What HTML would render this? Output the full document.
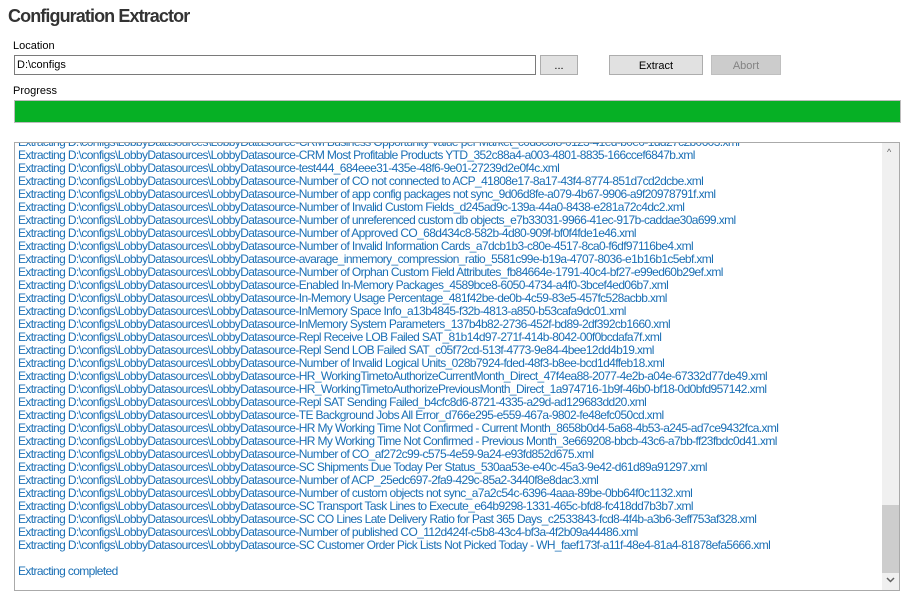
<!DOCTYPE html>
<html><head><meta charset="utf-8"><style>
*{margin:0;padding:0;box-sizing:border-box}
body{width:908px;height:603px;background:#fff;font-family:"Liberation Sans",sans-serif;font-size:12px;color:#000;position:relative;overflow:hidden}
.abs{position:absolute}
h1{position:absolute;left:8px;top:6px;font-size:18px;font-weight:bold;color:#333;letter-spacing:-0.9px}
.lbl{font-size:11px;color:#000}
.btn{position:absolute;border:1px solid #adadad;background:#e1e1e1;text-align:center;font-size:11px;line-height:20px;height:20px}
#log{position:absolute;left:14px;top:142px;width:886px;height:449px;border:1px solid #aaa;overflow:hidden}
#lines{position:absolute;left:3px;top:-7px;color:#1a6fb5;font-size:12px;line-height:13px;white-space:nowrap;letter-spacing:-0.62px}
#sb{position:absolute;right:0;top:0;width:17px;height:447px;background:#f0f0f0}
</style></head><body>
<h1>Configuration Extractor</h1>
<div class="abs lbl" style="left:13px;top:40px">Location</div>
<div class="abs" style="left:14px;top:55px;width:522px;height:20px;border:1px solid #7a7a7a;padding:3px 0 0 2px;font-size:11px">D:\configs</div>
<div class="btn" style="left:540px;top:55px;width:38px">...</div>
<div class="btn" style="left:609px;top:55px;width:94px">Extract</div>
<div class="btn" style="left:711px;top:55px;width:70px;background:#cccccc;border-color:#bfbfbf;color:#838383">Abort</div>
<div class="abs lbl" style="left:13px;top:85px">Progress</div>
<div class="abs" style="left:14px;top:100px;width:887px;height:23px;border:1px solid #bcbcbc;background:#06b025"></div>
<div id="log"><div id="lines">
Extracting D:\configs\LobbyDatasources\LobbyDatasource-CRM Business Opportunity Value per Market_c0d8c8f8-0123-41ed-b0e0-1dd27c2b0603.xml<br>
Extracting D:\configs\LobbyDatasources\LobbyDatasource-CRM Most Profitable Products YTD_352c88a4-a003-4801-8835-166ccef6847b.xml<br>
Extracting D:\configs\LobbyDatasources\LobbyDatasource-test444_684eee31-435e-48f6-9e01-27239d2e0f4c.xml<br>
Extracting D:\configs\LobbyDatasources\LobbyDatasource-Number of CO not connected to ACP_41808e17-8a17-43f4-8774-851d7cd2dcbe.xml<br>
Extracting D:\configs\LobbyDatasources\LobbyDatasource-Number of app config packages not sync_9d06d8fe-a079-4b67-9906-a9f20978791f.xml<br>
Extracting D:\configs\LobbyDatasources\LobbyDatasource-Number of Invalid Custom Fields_d245ad9c-139a-44a0-8438-e281a72c4dc2.xml<br>
Extracting D:\configs\LobbyDatasources\LobbyDatasource-Number of unreferenced custom db objects_e7b33031-9966-41ec-917b-caddae30a699.xml<br>
Extracting D:\configs\LobbyDatasources\LobbyDatasource-Number of Approved CO_68d434c8-582b-4d80-909f-bf0f4fde1e46.xml<br>
Extracting D:\configs\LobbyDatasources\LobbyDatasource-Number of Invalid Information Cards_a7dcb1b3-c80e-4517-8ca0-f6df97116be4.xml<br>
Extracting D:\configs\LobbyDatasources\LobbyDatasource-avarage_inmemory_compression_ratio_5581c99e-b19a-4707-8036-e1b16b1c5ebf.xml<br>
Extracting D:\configs\LobbyDatasources\LobbyDatasource-Number of Orphan Custom Field Attributes_fb84664e-1791-40c4-bf27-e99ed60b29ef.xml<br>
Extracting D:\configs\LobbyDatasources\LobbyDatasource-Enabled In-Memory Packages_4589bce8-6050-4734-a4f0-3bcef4ed06b7.xml<br>
Extracting D:\configs\LobbyDatasources\LobbyDatasource-In-Memory Usage Percentage_481f42be-de0b-4c59-83e5-457fc528acbb.xml<br>
Extracting D:\configs\LobbyDatasources\LobbyDatasource-InMemory Space Info_a13b4845-f32b-4813-a850-b53cafa9dc01.xml<br>
Extracting D:\configs\LobbyDatasources\LobbyDatasource-InMemory System Parameters_137b4b82-2736-452f-bd89-2df392cb1660.xml<br>
Extracting D:\configs\LobbyDatasources\LobbyDatasource-Repl Receive LOB Failed SAT_81b14d97-271f-414b-8042-00f0bcdafa7f.xml<br>
Extracting D:\configs\LobbyDatasources\LobbyDatasource-Repl Send LOB Failed SAT_c05f72cd-513f-4773-9e84-4bee12dd4b19.xml<br>
Extracting D:\configs\LobbyDatasources\LobbyDatasource-Number of Invalid Logical Units_028b7924-fded-48f3-b8ee-bcd1d4ffeb18.xml<br>
Extracting D:\configs\LobbyDatasources\LobbyDatasource-HR_WorkingTimetoAuthorizeCurrentMonth_Direct_47f4ea88-2077-4e2b-a04e-67332d77de49.xml<br>
Extracting D:\configs\LobbyDatasources\LobbyDatasource-HR_WorkingTimetoAuthorizePreviousMonth_Direct_1a974716-1b9f-46b0-bf18-0d0bfd957142.xml<br>
Extracting D:\configs\LobbyDatasources\LobbyDatasource-Repl SAT Sending Failed_b4cfc8d6-8721-4335-a29d-ad129683dd20.xml<br>
Extracting D:\configs\LobbyDatasources\LobbyDatasource-TE Background Jobs All Error_d766e295-e559-467a-9802-fe48efc050cd.xml<br>
Extracting D:\configs\LobbyDatasources\LobbyDatasource-HR My Working Time Not Confirmed - Current Month_8658b0d4-5a68-4b53-a245-ad7ce9432fca.xml<br>
Extracting D:\configs\LobbyDatasources\LobbyDatasource-HR My Working Time Not Confirmed - Previous Month_3e669208-bbcb-43c6-a7bb-ff23fbdc0d41.xml<br>
Extracting D:\configs\LobbyDatasources\LobbyDatasource-Number of CO_af272c99-c575-4e59-9a24-e93fd852d675.xml<br>
Extracting D:\configs\LobbyDatasources\LobbyDatasource-SC Shipments Due Today Per Status_530aa53e-e40c-45a3-9e42-d61d89a91297.xml<br>
Extracting D:\configs\LobbyDatasources\LobbyDatasource-Number of ACP_25edc697-2fa9-429c-85a2-3440f8e8dac3.xml<br>
Extracting D:\configs\LobbyDatasources\LobbyDatasource-Number of custom objects not sync_a7a2c54c-6396-4aaa-89be-0bb64f0c1132.xml<br>
Extracting D:\configs\LobbyDatasources\LobbyDatasource-SC Transport Task Lines to Execute_e64b9298-1331-465c-bfd8-fc418dd7b3b7.xml<br>
Extracting D:\configs\LobbyDatasources\LobbyDatasource-SC CO Lines Late Delivery Ratio for Past 365 Days_c2533843-fcd8-4f4b-a3b6-3eff753af328.xml<br>
Extracting D:\configs\LobbyDatasources\LobbyDatasource-Number of published CO_112d424f-c5b8-43c4-bf3a-4f2b09a44486.xml<br>
Extracting D:\configs\LobbyDatasources\LobbyDatasource-SC Customer Order Pick Lists Not Picked Today - WH_faef173f-a11f-48e4-81a4-81878efa5666.xml<br>
<br>
Extracting completed
</div>
<div id="sb">
<div class="abs" style="left:5px;top:4px;font-size:9px;color:#606060">&#94;</div>
<div class="abs" style="left:0;top:362px;width:17px;height:68px;background:#cdcdcd"></div>
<svg class="abs" style="left:4px;top:434px" width="9" height="6"><path d="M1 1 L4.5 4.5 L8 1" stroke="#606060" stroke-width="1.5" fill="none"/></svg>
</div>
</div>
</body></html>
